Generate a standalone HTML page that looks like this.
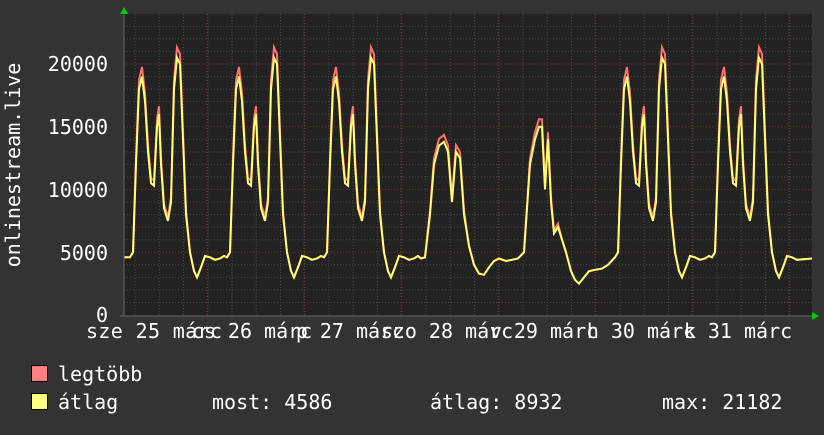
<!DOCTYPE html>
<html><head><meta charset="utf-8"><style>
html,body{margin:0;padding:0;background:#333;}
svg text{font-family:"DejaVu Sans Mono","Liberation Mono",monospace;fill:#fff;font-size:20px;}
</style></head><body>
<svg id="s" width="824" height="430" xmlns="http://www.w3.org/2000/svg">
<rect width="824" height="430" fill="#333"/>
<rect x="124" y="14" width="688" height="302" fill="#222"/>
<g id="grid"></g>
<polyline id="red" fill="none" stroke="#ff7070" stroke-width="2"/>
<polyline id="yel" fill="none" stroke="#ffff70" stroke-width="2"/>
<line x1="124" y1="14" x2="124" y2="316" stroke="#666"/>
<line x1="120" y1="316" x2="814" y2="316" stroke="#666"/>
<polygon points="120,14 128,14 124,7" fill="#0c0"/>
<polygon points="812,312 812,320 819,316" fill="#0c0"/>
<g text-anchor="end">
<text x="108" y="71">20000</text>
<text x="108" y="134">15000</text>
<text x="108" y="197">10000</text>
<text x="108" y="260">5000</text>
<text x="108" y="322">0</text>
</g>
<text transform="translate(20,165) rotate(-90)" text-anchor="middle">onlinestream.live</text>
<g text-anchor="middle">
<text x="154" y="338" textLength="136">sze 25 márc</text>
<text x="252" y="338">cs 26 márc</text>
<text x="350" y="338">p 27 márc</text>
<text x="447" y="338">szo 28 márc</text>
<text x="544" y="338">v 29 márc</text>
<text x="641" y="338">h 30 márc</text>
<text x="738" y="338">k 31 márc</text>
</g>
<rect x="31.5" y="365.5" width="16" height="16" fill="#ff8080" stroke="#000"/>
<rect x="31.5" y="393.5" width="16" height="16" fill="#ffff80" stroke="#000"/>
<text x="58" y="381">legtöbb</text>
<text x="58" y="409">átlag</text>
<text x="212" y="409">most: 4586</text>
<text x="430" y="409">átlag: 8932</text>
<text x="662" y="409">max: 21182</text>
</svg>
<script>
var g=document.getElementById('grid'),ns="http://www.w3.org/2000/svg";
function ln(x1,y1,x2,y2,c){var l=document.createElementNS(ns,'line');l.setAttribute('x1',x1);l.setAttribute('y1',y1);l.setAttribute('x2',x2);l.setAttribute('y2',y2);l.setAttribute('stroke',c);l.setAttribute('stroke-dasharray','1,2');g.appendChild(l);}
function Y(v){return 315-v*12.55;}
for(var v=1;v<=23;v++){ln(124,Y(v),812,Y(v),v%5==0?'#703030':'#484848');}
for(var x=135;x<812;x+=24.25){ln(x,14,x,316,'#484848');}
for(var d=0;d<7;d++){ln(207+d*97,14,207+d*97,316,'#703030');}
var wk=[[0,4.6],[3,5],[6,12],[9,18],[12,19],[15,17],[18,13],[21,10.5],[24,10.3],[27,15],[29,16],[31,12],[34,8.5],[38,7.5],[41,9],[44,18],[47,20.5],[50,20],[53,14],[56,8],[60,5],[64,3.5],[67,3],[71,3.8],[75,4.7],[80,4.6],[85,4.4],[90,4.5],[94,4.7]];
var sat=[[0,4.5],[4,4.6],[9,8],[13,12],[18,13.5],[23,13.8],[27,13],[31,9],[35,13],[39,12.5],[43,8],[48,5.5],[53,4],[58,3.3],[63,3.2],[68,3.8],[73,4.3],[78,4.5],[85,4.3],[91,4.4]];
var sun=[[0,4.5],[6,5],[12,12],[17,14],[21,15],[24,15],[27,10],[30,14],[33,9],[36,6.5],[40,7],[44,6],[48,5],[53,3.5],[57,2.8],[61,2.5],[66,3],[71,3.5],[77,3.6],[84,3.7],[90,4]];
var pts=[[124,4.6]],days=[wk,wk,wk,sat,sun,wk,wk];
for(var d=0;d<7;d++){var t=days[d];for(var i=0;i<t.length;i++){pts.push([130+d*97+t[i][0],t[i][1]]);}}
pts=pts.filter(function(p){return p[0]<=800;});pts.push([812,4.5]);
function s(k){return pts.map(function(p){return p[0]+','+Y(p[1]*(p[1]>6?k:1)).toFixed(1);}).join(' ');}
document.getElementById('red').setAttribute('points',s(1.04));
document.getElementById('yel').setAttribute('points',s(1));
</script>
</body></html>
